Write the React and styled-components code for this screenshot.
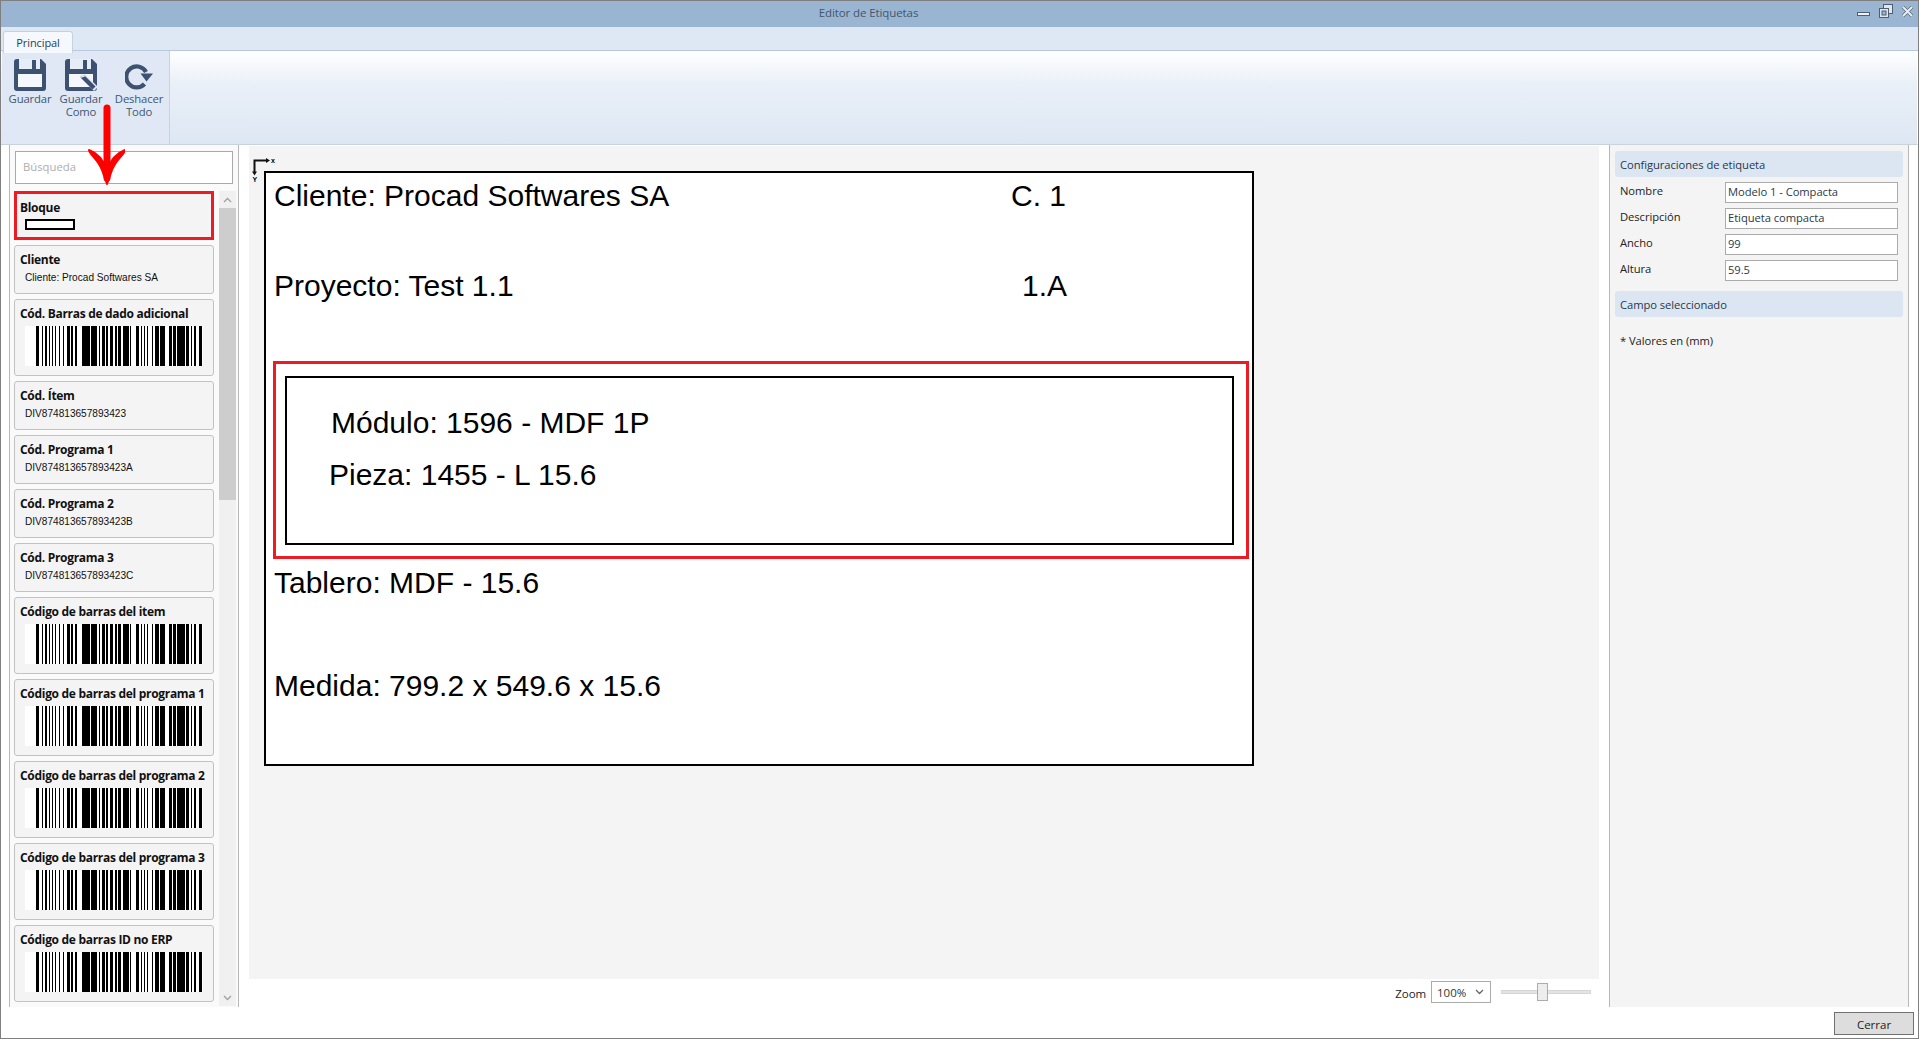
import React from "react";
import styled, { createGlobalStyle } from "styled-components";

const Global = createGlobalStyle`
  html, body { margin: 0; padding: 0; background: #fff; overflow: hidden; }
  * { box-sizing: border-box; }
  body { font-family: "Open Sans", "Noto Sans", sans-serif; }
`;

const Window = styled.div`
  position: relative;
  width: 1919px;
  height: 1039px;
  border: 1px solid #7f7f7f;
  display: flex;
  flex-direction: column;
  background: #fff;
  font-size: 11px;
  color: #222;
  overflow: hidden;
`;

const TitleBar = styled.div`
  height: 26px;
  flex: none;
  background: #9ab5d2;
  display: flex;
  align-items: center;
  position: relative;
  padding: 0 1px 4px 0;
`;

const Title = styled.div`
  width: 1735px;
  text-align: center;
  font-size: 11.5px;
  letter-spacing: -0.1px;
  color: #44566a;
`;

const WinButtons = styled.div`
  margin-left: auto;
  display: flex;
  align-items: center;
`;

const TabStrip = styled.div`
  height: 24px;
  flex: none;
  background: #dee8f4;
  border-bottom: 1px solid #b7c9de;
  padding: 4px 0 0 2px;
`;

const Tab = styled.div`
  width: 70px;
  height: 22px;
  background: #f5f8fc;
  border: 1px solid #c3d2e3;
  border-bottom: none;
  border-radius: 3px 3px 0 0;
  text-align: center;
  line-height: 22px;
  font-size: 11px;
  letter-spacing: -0.1px;
  color: #2b4058;
  position: relative;
`;

const Ribbon = styled.div`
  height: 94px;
  flex: none;
  display: flex;
  padding-left: 1px;
  background: linear-gradient(#ffffff 0%, #eaf0f8 35%, #dde7f3 100%);
  border-bottom: 1px solid #c9d3de;
  border-right: 1px solid #fff;
`;

const RibbonGroup = styled.div`
  width: 168px;
  background: #dfe8f4;
  border-right: 1px solid #c6d3e2;
  display: flex;
  padding: 7px 0 0 3px;
`;

const RibbonButton = styled.div`
  width: ${(p) => p.$w}px;
  margin-left: ${(p) => p.$gap || 0}px;
  display: flex;
  flex-direction: column;
  align-items: center;
  color: #3e5773;
  font-size: 11.3px;
  letter-spacing: -0.15px;
  line-height: 13px;
  text-align: center;
`;

const IconSlot = styled.div`
  height: 33px;
  display: flex;
  align-items: flex-end;
  margin-bottom: 1px;
`;

const Main = styled.div`
  flex: 1;
  display: flex;
  gap: 10px;
  padding: 0 9px 0 8px;
  min-height: 0;
`;

const LeftPanel = styled.div`
  width: 230px;
  flex: none;
  background: #fafafa;
  border: solid #b8b8b8;
  border-width: 0 1px;
  display: flex;
  flex-direction: column;
  min-height: 0;
`;

const Search = styled.input`
  width: 218px;
  height: 33px;
  flex: none;
  margin: 6px 0 7px 5px;
  border: 1px solid #a9a9a9;
  background: #fff;
  padding: 0 7px 2px;
  font-family: inherit;
  font-size: 11.3px;
  outline: none;
  &::placeholder { color: #aeaeae; opacity: 1; }
`;

const ListArea = styled.div`
  flex: 1;
  display: flex;
  min-height: 0;
  padding-left: 4px;
  padding-bottom: 1px;
  gap: 5px;
`;

const List = styled.div`
  width: 200px;
  display: flex;
  flex-direction: column;
  gap: 5px;
`;

const Item = styled.div`
  height: ${(p) => (p.$bars ? 77 : 49)}px;
  flex: none;
  background: #f4f4f4;
  border: ${(p) => (p.$marked ? "3px solid #ed1c24" : "1px solid #c2c2c2")};
  border-radius: ${(p) => (p.$marked ? 0 : 3)}px;
  padding: ${(p) => (p.$marked ? "6px 0 0 3px" : "6px 0 0 5px")};
`;

const ItemTitle = styled.div`
  font-weight: 700;
  font-size: 12px;
  line-height: 15px;
  letter-spacing: -0.3px;
  color: #111;
  white-space: nowrap;
`;

const ItemPreview = styled.div`
  font-family: "Liberation Sans", Arial, sans-serif;
  font-size: 10.1px;
  line-height: 12px;
  margin: 5px 0 0 5px;
  color: #111;
  white-space: nowrap;
`;

const BlockPreview = styled.div`
  width: 50px;
  height: 11px;
  margin: 4px 0 0 5px;
  background: #fff;
  border: 2px solid #000;
`;

const BarcodeBox = styled.svg`
  display: block;
  margin: 5px 0 0 5px;
`;

const ScrollTrack = styled.div`
  width: 17px;
  background: #f0f0f0;
  display: flex;
  flex-direction: column;
`;

const ScrollBtn = styled.div`
  height: 17px;
  flex: none;
  display: flex;
  align-items: center;
  justify-content: center;
`;

const ScrollThumb = styled.div`
  height: 292px;
  flex: none;
  background: #cdcdcd;
`;

const ScrollRest = styled.div`
  flex: 1;
`;

const Center = styled.div`
  width: 1350px;
  flex: none;
  display: flex;
  flex-direction: column;
`;

const Canvas = styled.div`
  flex: 1;
  margin-top: 1px;
  background: #f4f4f4;
  padding: 25px 0 0 15px;
  position: relative;
`;

const Axes = styled.svg`
  position: absolute;
  left: 2px;
  top: 11px;
`;

const LabelSheet = styled.div`
  position: relative;
  width: 990px;
  height: 595px;
  background: #fff;
  border: 2px solid #000;
  font-family: "Liberation Sans", Arial, sans-serif;
  font-size: 30px;
  line-height: 34px;
  color: #000;
`;

const LabelField = styled.div`
  position: absolute;
  left: ${(p) => p.$x}px;
  top: ${(p) => p.$y}px;
  white-space: nowrap;
`;

const MarkRect = styled.div`
  position: absolute;
  left: 7px;
  top: 188px;
  width: 976px;
  height: 198px;
  border: 3px solid #ed1c24;
`;

const BlockField = styled.div`
  position: absolute;
  left: 19px;
  top: 203px;
  width: 949px;
  height: 169px;
  border: 2px solid #000;
`;

const ZoomBar = styled.div`
  height: 28px;
  flex: none;
  display: flex;
  align-items: center;
  justify-content: flex-end;
  padding: 0 8px 2px 0;
`;

const ZoomLabel = styled.span`
  font-size: 11.5px;
  letter-spacing: -0.1px;
  margin: 2px 5px 0 0;
  color: #222;
`;

const Combo = styled.div`
  width: 60px;
  height: 22px;
  border: 1px solid #ababab;
  display: flex;
  align-items: center;
  justify-content: space-between;
  padding: 0 6px 0 5px;
  font-size: 11.5px;
  color: #333;
`;

const Slider = styled.div`
  width: 90px;
  height: 18px;
  margin-left: 10px;
  position: relative;
  display: flex;
  align-items: center;
`;

const SliderTrack = styled.div`
  width: 100%;
  height: 4px;
  background: #e4e4e4;
  border: 1px solid #d6d6d6;
`;

const SliderThumb = styled.div`
  position: absolute;
  left: 36px;
  top: 0;
  width: 11px;
  height: 18px;
  background: #ededed;
  border: 1px solid #acacac;
`;

const RightPanel = styled.div`
  width: 300px;
  flex: none;
  background: #f4f4f4;
  border: solid #b8b8b8;
  border-width: 0 1px;
  padding: 6px 5px 0 5px;
`;

const SectionHead = styled.div`
  height: 26px;
  background: #dce6f2;
  border-radius: 3px;
  padding: 1px 0 0 5px;
  line-height: 26px;
  font-size: 11.2px;
  letter-spacing: -0.05px;
  color: #26384c;
`;

const Rows = styled.div`
  display: flex;
  flex-direction: column;
  gap: 5px;
  margin: 5px 0 10px;
`;

const Row = styled.div`
  display: grid;
  grid-template-columns: 110px 173px;
  height: 21px;
  align-items: center;
`;

const RowLabel = styled.span`
  padding-left: 5px;
  margin-top: -4px;
  font-size: 11.2px;
  letter-spacing: -0.05px;
  color: #222;
`;

const RowInput = styled.div`
  height: 21px;
  border: 1px solid #ababab;
  background: #fff;
  padding-left: 2px;
  line-height: 18px;
  font-size: 11.2px;
  letter-spacing: -0.05px;
  color: #2a3a4c;
`;

const Note = styled.div`
  margin: 16px 0 0 5px;
  font-size: 11.2px;
  letter-spacing: -0.05px;
  line-height: 16px;
  color: #222;
`;

const Footer = styled.div`
  height: 31px;
  flex: none;
  display: flex;
  justify-content: flex-end;
  padding: 5px 4px 0 0;
`;

const CloseButton = styled.div`
  width: 80px;
  height: 23px;
  background: #dddddd;
  border: 1px solid #707070;
  text-align: center;
  line-height: 23px;
  font-size: 11.5px;
  color: #222;
`;

const ArrowMark = styled.svg`
  position: absolute;
  left: 84px;
  top: 103px;
`;

const BARS = [
  [11, 3], [17, 1], [20, 2], [24, 1], [27, 1], [30, 1], [34, 1], [38, 1], [42, 3], [46, 2], [50, 2],
  [57, 8], [66, 6], [74, 1], [77, 3], [81, 2], [85, 3], [90, 2], [93, 3], [98, 6], [105, 1],
  [111, 3], [116, 1], [119, 1], [122, 1], [127, 1], [130, 4], [135, 5], [144, 3], [148, 3], [152, 8], [161, 3], [166, 1], [169, 2], [174, 3],
];

function Barcode() {
  return (
    <BarcodeBox width="178" height="40" viewBox="0 0 178 40" shapeRendering="crispEdges">
      <rect width="178" height="40" fill="#fff" />
      {BARS.map(([x, w]) => (
        <rect key={x} x={x} width={w} height="40" fill="#000" />
      ))}
    </BarcodeBox>
  );
}

function Floppy({ pencil }) {
  return (
    <svg width="32" height="32" viewBox="0 0 32 32">
      <path d="M3 0H27L32 5V29a3 3 0 0 1-3 3H3a3 3 0 0 1-3-3V3a3 3 0 0 1 3-3Z" fill="#3d5170" />
      <rect x="5" y="0" width="21" height="10" fill="#e6edf6" />
      <rect x="18" y="1" width="4" height="9" fill="#3d5170" />
      <rect x="4" y="15" width="24" height="13" fill="#f4f7fb" />
      {pencil && (
        <g>
          <path d="M14 17l6-2 13 13-4 4-13-13Z" fill="#dfe8f4" />
          <path d="M15.5 18l4-1.5 11 11-3 3-11-11Z" fill="#3d5170" />
          <path d="M15.5 18l4-1.5.8.8-4 1.5Z" fill="#fff" />
        </g>
      )}
    </svg>
  );
}

function UndoAll() {
  return (
    <svg width="28" height="28" viewBox="0 0 28 28">
      <path d="M19.5 21A10.5 10.5 0 1 1 21 9" fill="none" stroke="#3d5170" strokeWidth="4.2" />
      <path d="M15.5 10.5H28L21.5 18.5Z" fill="#3d5170" />
    </svg>
  );
}

function Chevron({ up, color = "#a0a0a0" }) {
  return (
    <svg width="9" height="6" viewBox="0 0 9 6">
      <path d={up ? "M1 5L4.5 1.5 8 5" : "M1 1L4.5 4.5 8 1"} fill="none" stroke={color} strokeWidth="1.3" />
    </svg>
  );
}

function WindowControls() {
  return (
    <WinButtons>
      <svg width="61" height="20" viewBox="0 0 61 20">
        <rect x="1.5" y="10.5" width="12" height="3" fill="#eef2f7" stroke="#4f5f70" strokeWidth="1" />
        <rect x="27.5" y="2.5" width="9" height="9" fill="#dfe6ef" stroke="#4f5f70" />
        <rect x="23.5" y="6.5" width="9" height="9" fill="#dfe6ef" stroke="#4f5f70" />
        <rect x="26" y="9" width="4" height="4" fill="#9ab5d2" stroke="#4f5f70" />
        <path d="M47 5L56 14M56 5L47 14" stroke="#5a6b7c" strokeWidth="3.4" />
        <path d="M47 5L56 14M56 5L47 14" stroke="#e9eef5" strokeWidth="2" />
      </svg>
    </WinButtons>
  );
}

const lista = [
  { title: "Cliente", text: "Cliente: Procad Softwares SA" },
  { title: "Cód. Barras de dado adicional", bars: true },
  { title: "Cód. Ítem", text: "DIV874813657893423" },
  { title: "Cód. Programa 1", text: "DIV874813657893423A" },
  { title: "Cód. Programa 2", text: "DIV874813657893423B" },
  { title: "Cód. Programa 3", text: "DIV874813657893423C" },
  { title: "Código de barras del item", bars: true },
  { title: "Código de barras del programa 1", bars: true },
  { title: "Código de barras del programa 2", bars: true },
  { title: "Código de barras del programa 3", bars: true },
  { title: "Código de barras ID no ERP", bars: true },
];

const config = [
  ["Nombre", "Modelo 1 - Compacta"],
  ["Descripción", "Etiqueta compacta"],
  ["Ancho", "99"],
  ["Altura", "59.5"],
];

export default function App() {
  return (
    <Window>
      <Global />
      <TitleBar>
        <Title>Editor de Etiquetas</Title>
        <WindowControls />
      </TitleBar>
      <TabStrip>
        <Tab>Principal</Tab>
      </TabStrip>
      <Ribbon>
        <RibbonGroup>
          <RibbonButton $w={50}>
            <IconSlot><Floppy /></IconSlot>
            Guardar
          </RibbonButton>
          <RibbonButton $w={52}>
            <IconSlot><Floppy pencil /></IconSlot>
            Guardar Como
          </RibbonButton>
          <RibbonButton $w={60} $gap={2}>
            <IconSlot><UndoAll /></IconSlot>
            Deshacer Todo
          </RibbonButton>
        </RibbonGroup>
      </Ribbon>
      <Main>
        <LeftPanel>
          <Search placeholder="Búsqueda" />
          <ListArea>
            <List>
              <Item $marked>
                <ItemTitle>Bloque</ItemTitle>
                <BlockPreview />
              </Item>
              {lista.map((it) => (
                <Item key={it.title} $bars={it.bars}>
                  <ItemTitle>{it.title}</ItemTitle>
                  {it.bars ? <Barcode /> : <ItemPreview>{it.text}</ItemPreview>}
                </Item>
              ))}
            </List>
            <ScrollTrack>
              <ScrollBtn><Chevron up /></ScrollBtn>
              <ScrollThumb />
              <ScrollRest />
              <ScrollBtn><Chevron /></ScrollBtn>
            </ScrollTrack>
          </ListArea>
        </LeftPanel>
        <Center>
          <Canvas>
            <Axes width="28" height="26" viewBox="0 0 28 26">
              <path d="M3.5 15V3.5H16" fill="none" stroke="#111" strokeWidth="2" />
              <path d="M15 1l4 2.5-4 2.5ZM1 14.5h5L3.5 18.5Z" fill="#111" />
              <text x="20" y="6" fontSize="7" fontWeight="700" fontFamily="Liberation Sans">x</text>
              <text x="1.5" y="25" fontSize="7" fontWeight="700" fontFamily="Liberation Sans">Y</text>
            </Axes>
            <LabelSheet>
              <LabelField $x={8} $y={6}>Cliente: Procad Softwares SA</LabelField>
              <LabelField $x={745} $y={6}>C. 1</LabelField>
              <LabelField $x={8} $y={96}>Proyecto: Test 1.1</LabelField>
              <LabelField $x={756} $y={96}>1.A</LabelField>
              <MarkRect />
              <BlockField />
              <LabelField $x={65} $y={233}>Módulo: 1596 - MDF 1P</LabelField>
              <LabelField $x={63} $y={285}>Pieza: 1455 - L 15.6</LabelField>
              <LabelField $x={8} $y={393}>Tablero: MDF - 15.6</LabelField>
              <LabelField $x={8} $y={496}>Medida: 799.2 x 549.6 x 15.6</LabelField>
            </LabelSheet>
          </Canvas>
          <ZoomBar>
            <ZoomLabel>Zoom</ZoomLabel>
            <Combo>
              100%
              <Chevron color="#666" />
            </Combo>
            <Slider>
              <SliderTrack />
              <SliderThumb />
            </Slider>
          </ZoomBar>
        </Center>
        <RightPanel>
          <SectionHead>Configuraciones de etiqueta</SectionHead>
          <Rows>
            {config.map(([k, v]) => (
              <Row key={k}>
                <RowLabel>{k}</RowLabel>
                <RowInput>{v}</RowInput>
              </Row>
            ))}
          </Rows>
          <SectionHead>Campo seleccionado</SectionHead>
          <Note>* Valores en (mm)</Note>
        </RightPanel>
      </Main>
      <Footer>
        <CloseButton>Cerrar</CloseButton>
      </Footer>
      <ArrowMark width="40" height="82" viewBox="0 0 40 82">
        <path d="M22 4V74" stroke="#ff0000" strokeWidth="7" strokeLinecap="round" fill="none" />
        <path d="M4 46C12 49 18 55 22 66C26 55 32 49 40 46C40 50 31 55 27 66L22 80L17 66C13 55 4 50 4 46Z" fill="#ff0000" stroke="#ff0000" strokeWidth="2" strokeLinejoin="round" />
      </ArrowMark>
    </Window>
  );
}
